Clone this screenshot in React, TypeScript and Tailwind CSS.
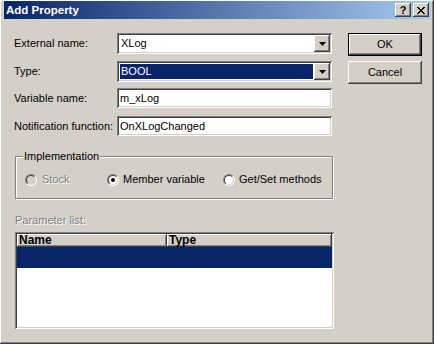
import React from "react";

const SUNKEN =
  "shadow-[inset_1px_1px_0_#808080,inset_-1px_-1px_0_#ffffff,inset_2px_2px_0_#404040,inset_-2px_-2px_0_#d4d0c8]";
const RAISED =
  "shadow-[inset_-1px_-1px_0_#404040,inset_1px_1px_0_#ffffff,inset_-2px_-2px_0_#808080,inset_2px_2px_0_#d4d0c8]";

function Arrow() {
  return (
    <div className={`w-[16px] h-full bg-[#d4d0c8] flex items-center justify-center ${RAISED}`}>
      <svg width="7" height="4" viewBox="0 0 7 4">
        <path d="M0 0H7L3.5 4Z" fill="#000" />
      </svg>
    </div>
  );
}

function Combo({ value, selected }: { value: string; selected?: boolean }) {
  return (
    <div className={`w-[215px] h-[21px] bg-white p-[2px] flex ${SUNKEN}`}>
      <div className="flex-1 flex items-center p-[1px]">
        <div
          className={`h-full w-full flex items-center pl-[1px] ${
            selected ? "bg-[#0a246a] text-white" : "text-black"
          }`}
        >
          {value}
        </div>
      </div>
      <Arrow />
    </div>
  );
}

function Edit({ value }: { value: string }) {
  return (
    <div className={`w-[215px] h-[20px] bg-white pl-[3px] flex items-center ${SUNKEN}`}>
      {value}
    </div>
  );
}

function Radio({ checked, disabled }: { checked?: boolean; disabled?: boolean }) {
  return (
    <div className="w-[12px] h-[12px] rounded-full border border-t-[#808080] border-l-[#808080] border-r-white border-b-white">
      <div
        className={`w-full h-full rounded-full border border-t-[#404040] border-l-[#404040] border-r-[#d4d0c8] border-b-[#d4d0c8] flex items-center justify-center ${
          disabled ? "bg-[#d4d0c8]" : "bg-white"
        }`}
      >
        {checked && <div className="w-[4px] h-[4px] rounded-full bg-black" />}
      </div>
    </div>
  );
}

function Row({ label, children, className }: { label: string; children: React.ReactNode; className?: string }) {
  return (
    <div className={`flex items-center ${className ?? ""}`}>
      <div className="w-[103px]">{label}</div>
      {children}
    </div>
  );
}

export default function App() {
  return (
    <div
      className="w-[434px] h-[344px] bg-[#d4d0c8] pt-[1px] pl-[4px] pr-[3px] pb-[3px] text-[11px] leading-[13px] text-black font-['Liberation_Sans',Arial,sans-serif] shadow-[inset_-1px_-1px_0_#404040,inset_1px_1px_0_#ffffff,inset_-2px_-2px_0_#808080] flex flex-col overflow-hidden"
    >
      {/* Title bar */}
      <div className="h-[18px] bg-[linear-gradient(to_right,#0a246a,#a6caf0)] flex items-center pl-[2px] pr-[2px]">
        <span className="text-white font-bold text-[11.5px] leading-[14px]">Add Property</span>
        <div className="ml-auto flex items-center">
          <div className={`w-[16px] h-[14px] bg-[#d4d0c8] flex items-center justify-center ${RAISED}`}>
            <span className="font-bold text-[11px] leading-[11px] text-black">?</span>
          </div>
          <div className={`ml-[2px] w-[16px] h-[14px] bg-[#d4d0c8] flex items-center justify-center ${RAISED}`}>
            <svg width="8" height="7" viewBox="0 0 8 7" shapeRendering="crispEdges">
              <path
                fill="#000"
                d="M0 0h2v1H0zM6 0h2v1H6zM1 1h2v1H1zM5 1h2v1H5zM2 2h4v1H2zM3 3h2v1H3zM2 4h4v1H2zM1 5h2v1H1zM5 5h2v1H5zM0 6h2v1H0zM6 6h2v1H6z"
              />
            </svg>
          </div>
        </div>
      </div>

      {/* Content */}
      <div className="flex pt-[14px] pl-[10px]">
        <div className="w-[319px] flex flex-col">
          <Row label="External name:">
            <Combo value="XLog" />
          </Row>
          <Row label="Type:" className="mt-[7px]">
            <Combo value="BOOL" selected />
          </Row>
          <Row label="Variable name:" className="mt-[6px]">
            <Edit value="m_xLog" />
          </Row>
          <Row label="Notification function:" className="mt-[8px]">
            <Edit value="OnXLogChanged" />
          </Row>

          {/* Group box */}
          <div className="relative mt-[20px] ml-[1px] w-[318px] h-[43px] border border-[#808080] shadow-[inset_1px_1px_0_#ffffff,1px_1px_0_#ffffff]">
            <span className="absolute left-[7px] top-[-7px] bg-[#d4d0c8] px-[1px]">Implementation</span>
            <div className="flex items-center pt-[16px] pl-[9px]">
              <div className="w-[82px] flex items-center">
                <Radio disabled />
                <span className="ml-[5px] text-[#808080] [text-shadow:1px_1px_0_#ffffff]">Stock</span>
              </div>
              <div className="w-[116px] flex items-center">
                <Radio checked />
                <span className="ml-[4px]">Member variable</span>
              </div>
              <div className="flex items-center">
                <Radio />
                <span className="ml-[4px]">Get/Set methods</span>
              </div>
            </div>
          </div>

          <div className="mt-[15px] ml-[1px] text-[#808080] [text-shadow:1px_1px_0_#ffffff]">Parameter list:</div>

          {/* List */}
          <div className={`mt-[5px] ml-[1px] w-[319px] h-[97px] bg-white p-[2px] ${SUNKEN}`}>
            <div className="flex h-[13px]">
              <div className={`w-[150px] h-full bg-[#d4d0c8] pl-[2px] font-bold text-[12px] leading-[13px] ${RAISED}`}>Name</div>
              <div className={`flex-1 h-full bg-[#d4d0c8] pl-[2px] font-bold text-[12px] leading-[13px] ${RAISED}`}>Type</div>
            </div>
            <div className="h-[21px] bg-[#0a246a]" />
          </div>
        </div>

        {/* Buttons */}
        <div className="ml-[15px] flex flex-col">
          <div className="w-[74px] h-[23px] border border-black">
            <div className={`w-full h-full bg-[#d4d0c8] flex items-center justify-center ${RAISED}`}>OK</div>
          </div>
          <div className={`mt-[5px] w-[74px] h-[23px] bg-[#d4d0c8] flex items-center justify-center ${RAISED}`}>Cancel</div>
        </div>
      </div>
    </div>
  );
}
